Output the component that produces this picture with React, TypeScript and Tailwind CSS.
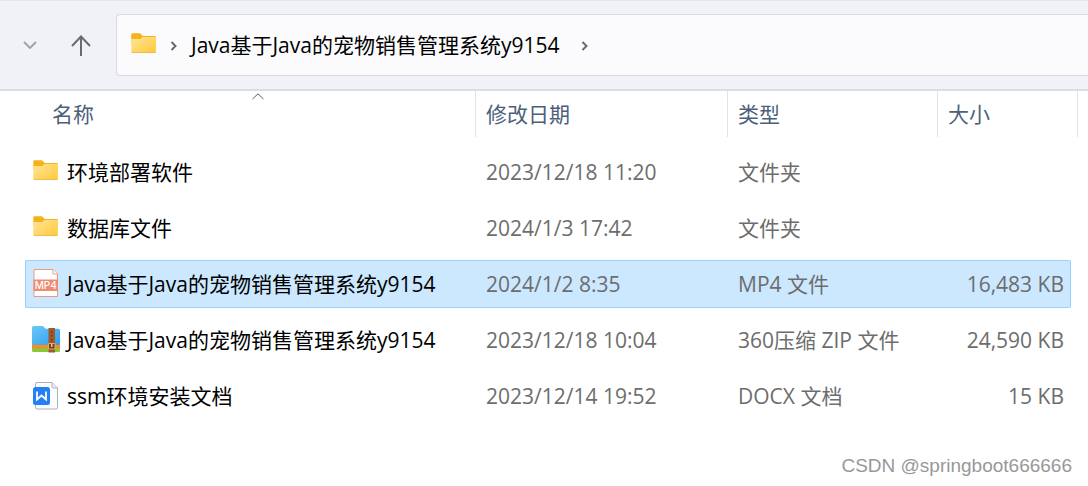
import { useState } from 'react';

type Kind = 'folder' | 'mp4' | 'zip' | 'docx';

const files: { name: string; date: string; type: string; size: string; kind: Kind }[] = [
    { name: '环境部署软件', date: '2023/12/18 11:20', type: '文件夹', size: '', kind: 'folder' },
    { name: '数据库文件', date: '2024/1/3 17:42', type: '文件夹', size: '', kind: 'folder' },
    { name: 'Java基于Java的宠物销售管理系统y9154', date: '2024/1/2 8:35', type: 'MP4 文件', size: '16,483 KB', kind: 'mp4' },
    { name: 'Java基于Java的宠物销售管理系统y9154', date: '2023/12/18 10:04', type: '360压缩 ZIP 文件', size: '24,590 KB', kind: 'zip' },
    { name: 'ssm环境安装文档', date: '2023/12/14 19:52', type: 'DOCX 文档', size: '15 KB', kind: 'docx' },
];

function FolderIcon() {
    return (
        <svg width="28" height="28" viewBox="0 0 28 28" className="shrink-0" aria-hidden="true">
            <defs>
                <linearGradient id="folder" x1="0" y1="0" x2="1" y2="1">
                    <stop offset="0" stopColor="#ffe59c" />
                    <stop offset="1" stopColor="#ffc937" />
                </linearGradient>
            </defs>
            <path d="M1.3 3.5a1.2 1.2 0 0 1 1.2-1.2h7c.6 0 1 .2 1.4.6l1.8 2h12a1.2 1.2 0 0 1 1.2 1.2V12H1.3z" fill="#f6b21b" />
            <path d="M1.3 8h8.4c.6 0 1-.2 1.4-.6l1.1-1.1c.3-.3.6-.4 1-.4h12.700v15a1.2 1.2 0 0 1-1.2 1.2H2.5a1.2 1.2 0 0 1-1.2-1.2z" fill="url(#folder)" />
            <path d="M1.5 21.3c.2.5.6.8 1.1.8h22.1c.5 0 .9-.3 1.1-.8z" fill="#e9b54a" />
        </svg>
    );
}

function Mp4Icon() {
    return (
        <svg width="28" height="30" viewBox="0 0 28 30" className="shrink-0" aria-hidden="true">
            <path d="M2 .5h19l4.500 4.500v22.500H2z" fill="#fff" stroke="#ef9880" />
            <path d="M21 .5v4.500h4.500" fill="#fff" stroke="#ef9880" />
            <path d="M1.500 10.500h24.500v11.500H1.500z" fill="#ee8b73" />
            <text x="13.700" y="20" textAnchor="middle" fontSize="10" fontWeight="500" fill="#fff" className="font-['Inter',sans-serif]">MP4</text>
        </svg>
    );
}

function ZipIcon() {
    return (
        <svg width="28" height="28" viewBox="0 0 28 28" className="shrink-0" aria-hidden="true">
            <defs>
                <linearGradient id="zip" x1="0" y1="0" x2="1" y2="1">
                    <stop offset="0" stopColor="#6cc8fb" />
                    <stop offset="1" stopColor="#2e9cea" />
                </linearGradient>
            </defs>
            <path d="M0 20h28v4.500a1.500 1.500 0 0 1-1.500 1.500h-25A1.500 1.500 0 0 1 0 24.500z" fill="#82cb3a" />
            <path d="M0 17h28v4a1.500 1.500 0 0 1-1.500 1.500h-25A1.500 1.500 0 0 1 0 21z" fill="#fb8a23" />
            <path d="M0 1.500A1.500 1.500 0 0 1 1.500 0h8.700c.8 0 1.400.3 1.800 1l.6 1c.3.500.7.700 1.300.7h12.600A1.500 1.500 0 0 1 28 4.200v13.300a1.500 1.500 0 0 1-1.500 1.500h-25A1.500 1.500 0 0 1 0 17.500z" fill="url(#zip)" />
            <path d="M16.500 2h6.500v24.500h-6.500z" fill="#a0592c" />
            <path d="M19.700 5v11" stroke="#6b3819" strokeWidth="1.500" strokeDasharray="1.500 2.500" />
            <path d="M16.500 17.500h6.500v5.500h-6.500z" fill="#7a3c18" stroke="#e0a868" />
            <path d="M19.700 18v3" stroke="#f0c890" strokeWidth="1.500" />
        </svg>
    );
}

function DocxIcon() {
    return (
        <svg width="28" height="28" viewBox="0 0 28 28" className="shrink-0" aria-hidden="true">
            <path d="M5 .5h15l5.500 5.500V25.500a1.500 1.500 0 0 1-1.500 1.500H5a1.500 1.500 0 0 1-1.500-1.500V2A1.500 1.500 0 0 1 5 .5z" fill="#fbfcfe" stroke="#a9b0bf" />
            <path d="M20 .8v3.700A1.500 1.500 0 0 0 21.500 6h3.800" fill="#e9ecf2" stroke="#a9b0bf" />
            <rect x="1" y="5" width="17" height="18" rx="2.500" fill="#2680f5" />
            <path d="M5 9.500v8l4.500-4 4.500 4v-8" fill="none" stroke="#fff" strokeWidth="1.800" />
        </svg>
    );
}

function FileIcon({ kind }: { kind: Kind }) {
    if (kind === 'folder') return <FolderIcon />;
    if (kind === 'mp4') return <Mp4Icon />;
    if (kind === 'zip') return <ZipIcon />;
    return <DocxIcon />;
}

function Crumb() {
    return (
        <svg width="8" height="12" viewBox="0 0 8 12" className="shrink-0" fill="none" stroke="#6b6b6b" strokeWidth="2" aria-hidden="true">
            <path d="M1.500 3l4 4-4 4" />
        </svg>
    );
}

export default function App() {
    const [selected, setSelected] = useState(2);

    return (
        <div className="flex min-h-screen flex-col bg-white text-[21px] leading-7 font-[390] text-black font-['Open_Sans','Noto_Sans_CJK_SC',sans-serif]">
            <header className="flex items-center border-t border-b-2 border-t-[#e5e6e9] border-b-[#dcdde2] bg-[#f0f2f8] py-[13px] pl-5">
                <button aria-label="最近浏览的位置" className="flex h-10 w-5 items-center justify-center">
                    <svg width="14" height="8" viewBox="0 0 14 8" fill="none" stroke="#a0a0a2" strokeWidth="1.800">
                        <path d="M1 1l6 6 6-6" />
                    </svg>
                </button>
                <button aria-label="向上" className="ml-7 flex h-10 w-7 items-center justify-center">
                    <svg width="22" height="22" viewBox="0 0 22 22" fill="none" stroke="#6b6b6b" strokeWidth="2">
                        <path d="M10 22V3M1 12l9-9.500 9 9.500" />
                    </svg>
                </button>
                <nav className="ml-5 flex h-[62px] flex-1 items-center rounded-l border border-r-0 border-[#d8d9dc] bg-[#fbfbfd] pl-[13px]">
                    <FolderIcon />
                    <span className="ml-3"><Crumb /></span>
                    <a href="#" className="mr-[22px] ml-[13px] whitespace-nowrap">Java基于Java的宠物销售管理系统y9154</a>
                    <Crumb />
                </nav>
            </header>

            <main className="flex-1 pr-[10px] pl-[25px]">
                <table className="w-full table-fixed border-collapse text-left">
                    <colgroup>
                        <col />
                        <col className="w-[252px]" />
                        <col className="w-[210px]" />
                        <col className="w-[140px]" />
                    </colgroup>
                    <thead className="text-[#4c607a]">
                        <tr>
                            <th className="p-0 pb-[7px] font-[390]" aria-sort="ascending">
                                <div className="relative flex h-[46px] items-center border-r border-[#e3e3e3] pl-[27px]">
                                    名称
                                    <svg width="12" height="7" viewBox="0 0 12 7" className="absolute top-0.5 left-1/2 ml-0.5" fill="none" stroke="#5c5c5c" aria-hidden="true">
                                        <path d="M.5 6L6 .8 11.500 6" />
                                    </svg>
                                </div>
                            </th>
                            <th className="p-0 pb-[7px] font-[390]">
                                <div className="flex h-[46px] items-center border-r border-[#e3e3e3] pl-[10px]">修改日期</div>
                            </th>
                            <th className="p-0 pb-[7px] font-[390]">
                                <div className="flex h-[46px] items-center border-r border-[#e3e3e3] pl-[10px]">类型</div>
                            </th>
                            <th className="p-0 pb-[7px] font-[390]">
                                <div className="flex h-[46px] items-center border-r border-[#e3e3e3] pl-[10px]">大小</div>
                            </th>
                        </tr>
                    </thead>
                    <tbody className="whitespace-nowrap text-[#6d6d6d]">
                        {files.map((file, i) => {
                            const tone = i === selected ? 'border-[#99d1ff] bg-[#cce8ff]' : 'border-transparent';
                            return (
                                <tr key={i} onClick={() => setSelected(i)} aria-selected={i === selected}>
                                    <td className="px-0 py-1">
                                        <div className={`flex h-12 items-center gap-[7px] rounded-l-xs border-y border-l pl-[6px] text-black ${tone}`}>
                                            <FileIcon kind={file.kind} />
                                            {file.name}
                                        </div>
                                    </td>
                                    <td className="px-0 py-1">
                                        <div className={`flex h-12 items-center border-y pl-[10px] ${tone}`}>{file.date}</div>
                                    </td>
                                    <td className="px-0 py-1">
                                        <div className={`flex h-12 items-center border-y pl-[10px] ${tone}`}>{file.type}</div>
                                    </td>
                                    <td className="py-1 pr-[7px] pl-0">
                                        <div className={`flex h-12 items-center justify-end rounded-r-xs border-y border-r pr-[6px] ${tone}`}>{file.size}</div>
                                    </td>
                                </tr>
                            );
                        })}
                    </tbody>
                </table>
            </main>

            <footer className="pr-4 pb-[6px] text-right text-[19px] text-[#989898] font-['Liberation_Sans',sans-serif]">
                CSDN @springboot666666
            </footer>
        </div>
    );
}
